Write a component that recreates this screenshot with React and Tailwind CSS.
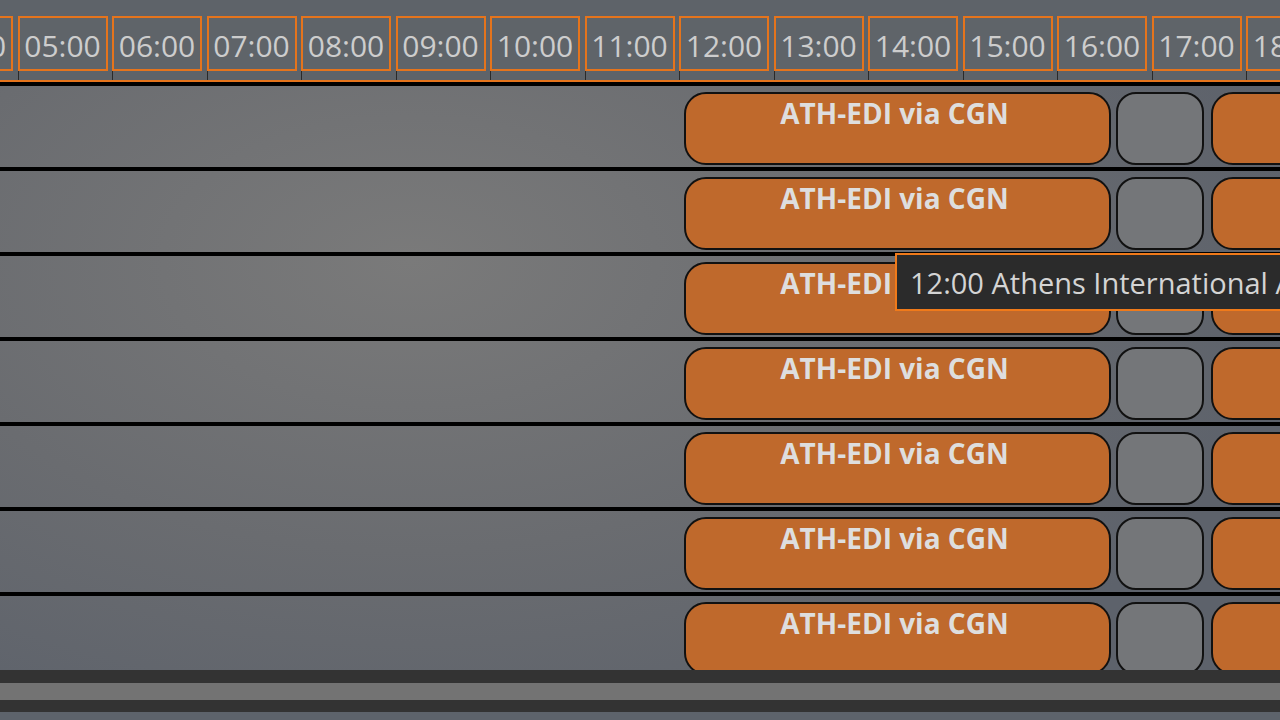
import React from 'react';

const HOURS = ['04:00', '05:00', '06:00', '07:00', '08:00', '09:00', '10:00', '11:00', '12:00', '13:00', '14:00', '15:00', '16:00', '17:00', '18:00', '19:00'];
const ROWS = [0, 1, 2, 3, 4, 5, 6];

function HourCell({ label }) {
  return (
    <div className="w-[94.5px] shrink-0 h-full flex flex-col">
      <div className="mt-[16px] w-[90px] h-[57px] border-2 border-[#e5741c] bg-[#5f6469] flex items-center justify-center pt-[4px]">
        <span className="text-[30px] leading-none text-[#cdcdcd]">{label}</span>
      </div>
      <div className="w-px h-[9px] bg-[#2a2a2a]" />
    </div>
  );
}

function TripRow() {
  return (
    <div className="h-[85px] shrink-0 border-b-4 border-black flex items-start pt-[6px] pl-[684px]">
      <div className="w-[427px] h-[73px] shrink-0 rounded-[22px] border-2 border-[#111] bg-[#bf692c] flex justify-center pt-[5px] pr-[6px]">
        <span className="text-[28px] leading-none font-bold text-[#dedede]">ATH-EDI via CGN</span>
      </div>
      <div className="ml-[5px] w-[88px] h-[73px] shrink-0 rounded-[20px] border-2 border-[#111] bg-[#747679]" />
      <div className="ml-[7px] w-[200px] h-[73px] shrink-0 rounded-[22px] border-2 border-[#111] bg-[#bf692c]" />
    </div>
  );
}

export default function App() {
  return (
    <div className="w-[1280px] h-[720px] overflow-hidden relative bg-[#5d626a] font-['Open_Sans',sans-serif]">
      {/* hour ruler */}
      <div className="h-[80px] bg-[#5e6369] flex ml-[-77px]">
        {HOURS.map(h => <HourCell key={h} label={h} />)}
      </div>
      <div className="h-[2px] bg-[#e5741c]" />
      <div className="h-[4px] bg-black" />

      {/* schedule rows */}
      <div className="h-[584px] overflow-hidden flex flex-col bg-[radial-gradient(ellipse_70%_90%_at_32%_30%,#7a7a7a,#6a6c70_55%,#5d626b)]">
        {ROWS.map(r => <TripRow key={r} />)}
      </div>

      {/* scrollbar */}
      <div className="h-[13px] bg-[#333333]" />
      <div className="h-[17px] bg-[#737373]" />
      <div className="h-[12px] bg-[#333333]" />
      <div className="h-[8px] bg-[#5d636b]" />

      {/* tooltip */}
      <div className="absolute left-[895px] top-[253px] w-[420px] h-[58px] border-2 border-[#f07a1a] bg-[#2b2b2b] flex items-center pl-[13px] whitespace-nowrap">
        <span className="text-[29px] leading-none text-[#d4d4d4]">12:00 Athens International Airport</span>
      </div>
    </div>
  );
}
